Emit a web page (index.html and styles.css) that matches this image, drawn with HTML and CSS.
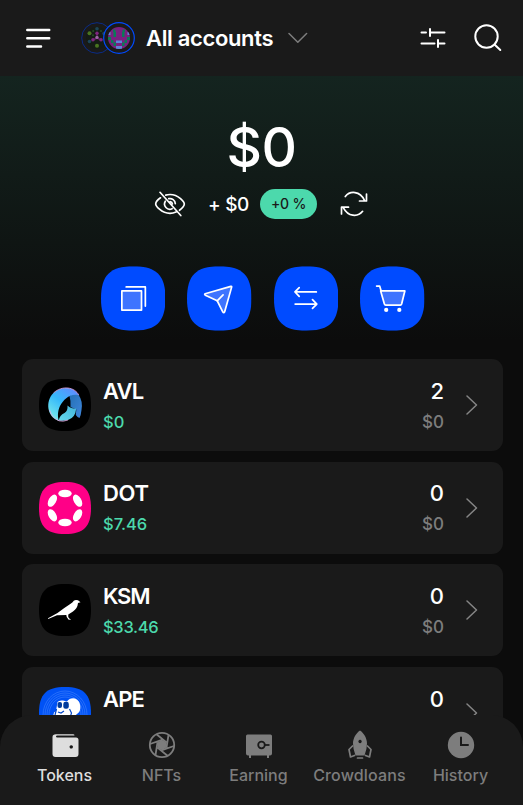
FILE: index.html
```
<!DOCTYPE html>
<html lang="en">
<head>
<meta charset="utf-8">
<title>Wallet</title>
<link rel="stylesheet" href="styles.css">
</head>
<body>
<svg class="defs" width="0" height="0" aria-hidden="true">
  <symbol id="squircle" viewBox="0 0 64 64"><path d="M32 0C55 0 64 9 64 32S55 64 32 64 0 55 0 32 9 0 32 0Z"/></symbol>
  <symbol id="chevron" viewBox="0 0 12 20"><path d="M1 1l9.500 9L1 19" fill="none" stroke="#858585" stroke-width="1.500" stroke-linecap="round" stroke-linejoin="round"/></symbol>
</svg>
<div class="app">
  <header class="header">
    <svg class="menu" width="26" height="21" viewBox="0 0 26 21" stroke="#fff" stroke-width="2.500" stroke-linecap="round"><path d="M2.300 2.100H24.200M2.300 10.300H24.200M2.300 18.400H16"/></svg>
    <svg class="avatars" width="54" height="32" viewBox="0 0 54 32">
      <circle cx="16" cy="16" r="15.300" fill="#1a1a1a" stroke="#0b2c87"/>
      <circle cx="16" cy="16" r="11" fill="#151c15"/>
      <path d="M16 16V11M16 16l-4 2M16 16l4 2" stroke="#591b59" stroke-width="1.500"/>
      <g fill="#1c4457"><circle cx="16" cy="6.800" r="1.800"/><circle cx="8.500" cy="19.500" r="1.800"/><circle cx="23" cy="11.500" r="1.800"/></g>
      <g fill="#4a7520"><circle cx="8.500" cy="11.200" r="2"/><circle cx="16" cy="23.800" r="2"/></g>
      <g fill="#7f257f"><circle cx="16" cy="11.200" r="1.700"/><circle cx="12" cy="17.800" r="1.800"/><circle cx="20" cy="17.800" r="1.800"/></g>
      <circle cx="16" cy="15.400" r="1.700" fill="#9b68a4"/>
      <g fill="#234d24"><circle cx="12.200" cy="9" r="1"/><circle cx="20" cy="9" r="1"/><circle cx="12" cy="13.300" r="1"/></g>
      <circle cx="38" cy="16" r="15.300" fill="#1a1a1a" stroke="#004bff" stroke-width="1.200"/>
      <clipPath id="face"><circle cx="38" cy="16" r="11"/></clipPath>
      <g clip-path="url(#face)"><path fill="#792080" d="M27 5h22v22H27z"/>
      <path fill="#087b57" d="M32.500 10h2.500v5h-2.500zM41 10h2.500v5H41zM32 7.500h2.500V10H32zM41.500 7.500H44V10h-2.500zM27 15h3v3h-3zM46 15h3v3h-3zM30 18h2.500v3H30zM43.500 18H46v3h-2.500zM32.500 20.500H35V24h-2.500zM41 20.500h2.500V24H41z"/>
      <path fill="#5c86d5" d="M35 18.500h6V21h-6zM35 24h6v3h-6zM27 10h2.500v3H27zM46.500 10H49v3h-2.500z"/></g>
    </svg>
    <span class="account">All accounts</span>
    <svg class="down" width="20" height="12" viewBox="0 0 20 12"><path d="M1 1.500L9.800 10.300 18.600 1.500" fill="none" stroke="#7d7d7d" stroke-width="1.500" stroke-linecap="round" stroke-linejoin="round"/></svg>
    <svg class="filters" width="26" height="22" viewBox="0 0 26 22" stroke="#fff" stroke-width="2" stroke-linecap="round"><path d="M1.500 5.500H6M10 2v7M10 5.500H24.500M1.500 16.500H14.500M18 13v7M18 16.500h6.500"/></svg>
    <svg class="search" width="30" height="30" viewBox="0 0 30 30" fill="none" stroke="#fff" stroke-width="2" stroke-linecap="round"><circle cx="13.500" cy="13.500" r="11.200"/><path d="M21.500 21.500l5.800 5.500"/></svg>
  </header>

  <main class="main">
    <section class="balance">
      <h1 class="total">$0</h1>
      <div class="change">
        <svg class="eye" width="32" height="28" viewBox="0 0 32 28" fill="none" stroke="#fff" stroke-width="1.700" stroke-linecap="round" stroke-linejoin="round">
          <path d="M6.500 7.800C3.500 10 1.700 13 1.700 14c0 1.500 5.300 9.300 14.300 9.300 2.200 0 4.200-.5 6-1.300M11.700 5.100c1.300-.4 2.700-.6 4.300-.6 9 0 14.300 8 14.300 9.500 0 1-1.700 4-4.800 6.300M11.300 11.200a5.300 5.300 0 0 0 6.800 7.500M14.800 8.700a5.300 5.300 0 0 1 6.500 4.900M16.200 11.600a2.600 2.600 0 0 1 2.200 2.200M6 2.300L26.800 25.500"/>
        </svg>
        <span class="delta">+ $0</span>
        <span class="badge">+0 %</span>
        <svg class="refresh" width="28" height="26" viewBox="0 0 28 26" fill="none" stroke="#fff" stroke-width="1.700" stroke-linecap="round" stroke-linejoin="round"><path d="M5.300 5.500C10-.5 20-.2 24.500 9.300M26.500 3v7h-7M22.600 20.300C17.500 26.500 8 25.500 3.400 16.800M1.500 23v-6.800h7"/></svg>
      </div>
      <nav class="actions">
        <svg class="action" viewBox="0 0 64 64"><use href="#squircle" width="64" height="64" fill="#004bff"/><g stroke="#fff" stroke-width="1.700" stroke-linejoin="round" stroke-linecap="round" fill="none"><path d="M20.700 24.500h19.500v19H20.700z" fill="#3e74ff"/><path d="M25 20.500h19v19"/></g></svg>
        <svg class="action" viewBox="0 0 64 64"><use href="#squircle" width="64" height="64" fill="#004bff"/><g stroke="#fff" stroke-width="1.700" stroke-linejoin="round" stroke-linecap="round"><path d="M18 27.300L43.500 19.900Q44.500 19.700 44.300 20.700L37.300 45.300Q36.500 47 35.500 45.300L30 34.300 18.200 28.700Q17 27.800 18 27.300Z" fill="#3e74ff"/><path d="M30 34.300l5.800-5.800"/></g></svg>
        <svg class="action" viewBox="0 0 64 64"><use href="#squircle" width="64" height="64" fill="#004bff"/><path d="M42 25.500H21.300M25 21.200l-4.200 4.300L25 29.800M21 37.500h21.500M38.200 33.200l4.300 4.300-4.300 4.300" fill="none" stroke="#fff" stroke-width="1.700" stroke-linejoin="round" stroke-linecap="round"/></svg>
        <svg class="action" viewBox="0 0 64 64"><use href="#squircle" width="64" height="64" fill="#004bff"/><g stroke="#fff" stroke-width="1.700" stroke-linejoin="round" stroke-linecap="round"><path d="M20.500 24.500H44.500L41.300 37.500Q41 38.500 40 38.500H25.500Q24.500 38.500 24.200 37.500Z" fill="#3e74ff"/><path d="M16.500 19.700h3l1.500 4.800" fill="none"/></g><g fill="#fff"><circle cx="26" cy="43.300" r="2.100"/><circle cx="39" cy="43.300" r="2.100"/></g></svg>
      </nav>
    </section>

    <section class="tokens">
      <article class="token">
        <svg class="logo" viewBox="0 0 52 52">
          <defs>
            <linearGradient id="ring" x1=".9" y1="0" x2=".2" y2="1"><stop offset="0" stop-color="#6587ff"/><stop offset=".5" stop-color="#36b9fb"/><stop offset="1" stop-color="#7beceb"/></linearGradient>
            <linearGradient id="fold" x1="0" y1="0" x2="1" y2="1"><stop offset="0" stop-color="#2470b4"/><stop offset="1" stop-color="#3f86dc"/></linearGradient>
            <linearGradient id="tail" x1="0" y1="1" x2="1" y2="0"><stop offset="0" stop-color="#66d8ec"/><stop offset="1" stop-color="#42b5dc"/></linearGradient>
          </defs>
          <use href="#squircle" width="52" height="52" fill="#000"/>
          <path d="M30.500 17Q36 13 39.800 16.200 44 22 42.500 31 42 36 40.500 39 38.500 38.500 36.800 36L37.300 30.500 31.500 28Q32 22 30.500 17Z" fill="url(#fold)"/>
          <path d="M28.500 26.500Q32 29.700 37.200 29.700 36.500 38 29.500 40.800 24 42.500 19.800 41.500 20.500 36 25.500 34 29 32 28.500 26.500Z" fill="url(#tail)"/>
          <path d="M19.500 41.700C8 38 6 22 14.500 14 23 6 36 8 39.800 16.200 31 14 25 20 21 27 18.500 32 18.500 38 20 42Z" fill="url(#ring)"/>
          <path d="M14.500 14C23 6 36 8 39.800 16.200M10.500 31Q13 39 20 41.800 24 43 29 41" fill="none" stroke="#e4a4e0" stroke-width=".8"/>
        </svg>
        <div class="info"><span class="name">AVL</span><span class="price">$0</span></div>
        <div class="holding"><span class="amount">2</span><span class="value">$0</span></div>
        <svg class="more"><use href="#chevron"/></svg>
      </article>
      <article class="token">
        <svg class="logo" viewBox="0 0 52 52"><use href="#squircle" width="52" height="52" fill="#ff0087"/><g fill="#fff"><ellipse cx="26" cy="11.500" rx="6.700" ry="3.800"/><ellipse cx="26" cy="40.500" rx="6.700" ry="3.800"/><ellipse cx="13.400" cy="18.700" rx="6.700" ry="3.800" transform="rotate(-60 13.400 18.700)"/><ellipse cx="38.600" cy="18.700" rx="6.700" ry="3.800" transform="rotate(60 38.600 18.700)"/><ellipse cx="13.400" cy="33.300" rx="6.700" ry="3.800" transform="rotate(60 13.400 33.300)"/><ellipse cx="38.600" cy="33.300" rx="6.700" ry="3.800" transform="rotate(-60 38.600 33.300)"/></g></svg>
        <div class="info"><span class="name dot">DOT</span><span class="price">$7.46</span></div>
        <div class="holding"><span class="amount">0</span><span class="value">$0</span></div>
        <svg class="more"><use href="#chevron"/></svg>
      </article>
      <article class="token">
        <svg class="logo" viewBox="0 0 52 52"><use href="#squircle" width="52" height="52" fill="#000"/><path fill="#fff" d="M9 34.300L18.500 29Q25 24 30.500 20.500 34 18.200 34.800 16.700 36.500 15.300 39 16.300L41.500 18.200 39 19Q38.500 24.500 34 27.500L29.300 30.600Q28.700 33 30.300 34.600L32.200 35.500 29.700 35.800Q27 33 27.300 31L18 31.300 9.200 35Z"/></svg>
        <div class="info"><span class="name ksm">KSM</span><span class="price long">$33.46</span></div>
        <div class="holding"><span class="amount">0</span><span class="value">$0</span></div>
        <svg class="more"><use href="#chevron"/></svg>
      </article>
      <article class="token">
        <svg class="logo" viewBox="0 0 52 52"><use href="#squircle" width="52" height="52" fill="#0052f5"/>
          <g fill="none" stroke="#4c8bff" stroke-width=".5"><ellipse cx="26" cy="28" rx="16" ry="18"/><ellipse cx="26" cy="28" rx="18" ry="20"/><ellipse cx="26" cy="28" rx="20" ry="22"/><ellipse cx="26" cy="28" rx="22" ry="24"/></g>
          <path d="M13.500 32L15 25.500 17 24 18.500 15Q20 13 24 13.500L28 14.500Q31 10.500 36 11.500 41 13.500 41.300 19 42 24 38 27L32 32Z" fill="#fff"/>
          <g fill="#003b9d"><rect x="18.500" y="15" width="4.500" height="6" rx="2"/><rect x="24.300" y="14.800" width="5.500" height="7" rx="2.300"/></g>
          <path d="M17.500 22l-1.500 6M19 25l3 1 3-2M30.500 22l2 4-1 3" fill="none" stroke="#0046c9" stroke-width="1.200"/>
        </svg>
        <div class="info"><span class="name">APE</span><span class="price">$0</span></div>
        <div class="holding"><span class="amount">0</span><span class="value">$0</span></div>
        <svg class="more"><use href="#chevron"/></svg>
      </article>
    </section>
  </main>

  <nav class="tabs">
    <a class="tab active">
      <svg viewBox="0 0 32 32"><path fill="currentColor" fill-rule="evenodd" d="M7 5.200H24Q25.500 5.200 25.500 6.500H8.200Q7 6.500 7 7.400T8.200 8.400H27Q29.500 8.400 29.500 11V25Q29.500 28 26.500 28H6.500Q3.500 28 3.500 25V8Q3.500 5.200 7 5.200ZM22.200 16.200a1.700 1.700 0 1 0 .1 0Z"/></svg>
      <span>Tokens</span>
    </a>
    <a class="tab">
      <svg viewBox="0 0 32 32" fill="none" stroke="currentColor" stroke-width="1.800"><circle cx="16" cy="16" r="12.200"/><path fill="currentColor" stroke="none" d="M16 10.800l4.500 2.600v5.200L16 21.200l-4.500-2.600v-5.200Z"/><path d="M20.500 13.400L10.500 5.300M20.500 18.600L22.500 6M16 21.200L28 17M11.500 18.600L21.500 26.700M11.500 13.400L9.500 26M16 10.800L4 15"/></svg>
      <span>NFTs</span>
    </a>
    <a class="tab">
      <svg viewBox="0 0 32 32"><path fill="currentColor" d="M4.500 5.500h23Q29 5.500 29 7V24.500Q29 26.500 27 26.500H26v2.500H24v-2.500H8v2.500H6v-2.500H5Q3 26.500 3 24.500V7Q3 5.500 4.500 5.500Z"/><circle cx="18.500" cy="16" r="3.300" fill="none" stroke="#1a1a1a" stroke-width="1.800"/><path d="M21.800 16h4.700" stroke="#1a1a1a" stroke-width="1.800"/></svg>
      <span>Earning</span>
    </a>
    <a class="tab crowd">
      <svg viewBox="0 0 32 32"><path fill="currentColor" fill-rule="evenodd" d="M16 1.500C20 4 23 9.500 23 14.500Q23 20 20.500 26.500H11.500Q9 20 9 14.500C9 9.500 12 4 16 1.500ZM16 10.800a1.700 1.700 0 1 0 .1 0Z"/><path d="M8.500 17L5 20.500 6.500 28l4-1.500M23.500 17l3.500 3.500-1.500 7.500-4-1.500M13.500 29h5" fill="none" stroke="currentColor" stroke-width="1.700" stroke-linecap="round" stroke-linejoin="round"/></svg>
      <span>Crowdloans</span>
    </a>
    <a class="tab">
      <svg viewBox="0 0 32 32"><circle cx="16" cy="16" r="13.200" fill="currentColor"/><path d="M16 8.500V16h7" fill="none" stroke="#1a1a1a" stroke-width="2" stroke-linecap="round"/></svg>
      <span>History</span>
    </a>
  </nav>
</div>
</body>
</html>
```
FILE: styles.css
```
* { box-sizing: border-box; }
body { margin: 0; background: #0c0c0c; color: #fff; font-family: Inter, sans-serif; font-weight: 500; }
svg { display: block; flex: none; }
.defs { position: absolute; }
.app { height: 805px; display: flex; flex-direction: column; overflow: hidden; position: relative; }
.header { flex: none; height: 76px; background: #1a1a1a; display: flex; align-items: center; padding-left: 25px; padding-right: 20px; }
.menu { margin-left: -.5px; }
.avatars { margin-left: 30.500px; }
.account { margin-left: 11px; width: 128px; font-size: 22px; font-weight: 600; letter-spacing: -.35px; white-space: nowrap; }
.down { margin-left: 13.500px; }
.filters { margin-left: auto; }
.search { margin-left: 27px; }
.main { flex: 1; min-height: 0; background: linear-gradient(#14241f, #0c0c0c 265px); }
.balance { display: flex; flex-direction: column; align-items: center; }
.total { margin: 38px 0 0; height: 67px; font-size: 55px; line-height: 67px; font-weight: 500; letter-spacing: -.5px; }
.change { margin-top: 8px; height: 30px; width: 215px; display: flex; align-items: center; }
.delta { margin-left: 22px; width: 41px; font-size: 19px; letter-spacing: -.3px; white-space: nowrap; }
.badge { margin-left: 11px; width: 57px; height: 30px; line-height: 30px; border-radius: 15px; background: #4cd9ac; color: #1a1a1a; text-align: center; font-size: 14px; letter-spacing: -.2px; }
.refresh { margin-left: 23px; }
.actions { margin: 47px 0 0 2px; display: flex; gap: 22px; }
.action { width: 64.500px; height: 65px; }
.tokens { margin: 28px 20px 0 22px; display: flex; flex-direction: column; gap: 10.670px; }
.token { height: 92px; border-radius: 11px; background: #1a1a1a; display: flex; align-items: center; padding: 0 25.500px 0 17px; }
.logo { width: 52px; height: 52px; }
.info, .holding { display: flex; flex-direction: column; padding-top: 1.500px; }
.info { margin-left: 12px; }
.holding { margin-left: auto; align-items: flex-end; }
.name, .amount { font-size: 22px; line-height: 32px; font-weight: 600; }
.name { letter-spacing: -.8px; }
.dot { letter-spacing: -.3px; }
.amount { font-weight: 500; }
.ksm { letter-spacing: -1.200px; }
.price, .value { font-size: 16.500px; line-height: 30px; }
.price { color: #4cd9ac; }
.long { letter-spacing: -.3px; }
.value { color: #7d7d7d; font-size: 17px; }
.more { width: 12px; height: 20px; margin-left: 21.500px; }
.tabs { position: absolute; left: 0; right: 0; bottom: 0; height: 90px; padding: 14px 0 0 16px; border-radius: 32px 32px 0 0; background: #1a1a1a; display: grid; grid-template-columns: 97px 97px 97px 105px 97px; }
.tab { display: flex; flex-direction: column; align-items: center; color: #7d7d7d; font-size: 16px; line-height: 24px; white-space: nowrap; }
.tab svg { width: 32px; height: 32px; margin-bottom: 2px; }
.crowd { letter-spacing: .15px; }
.active { color: #dedede; }
```
